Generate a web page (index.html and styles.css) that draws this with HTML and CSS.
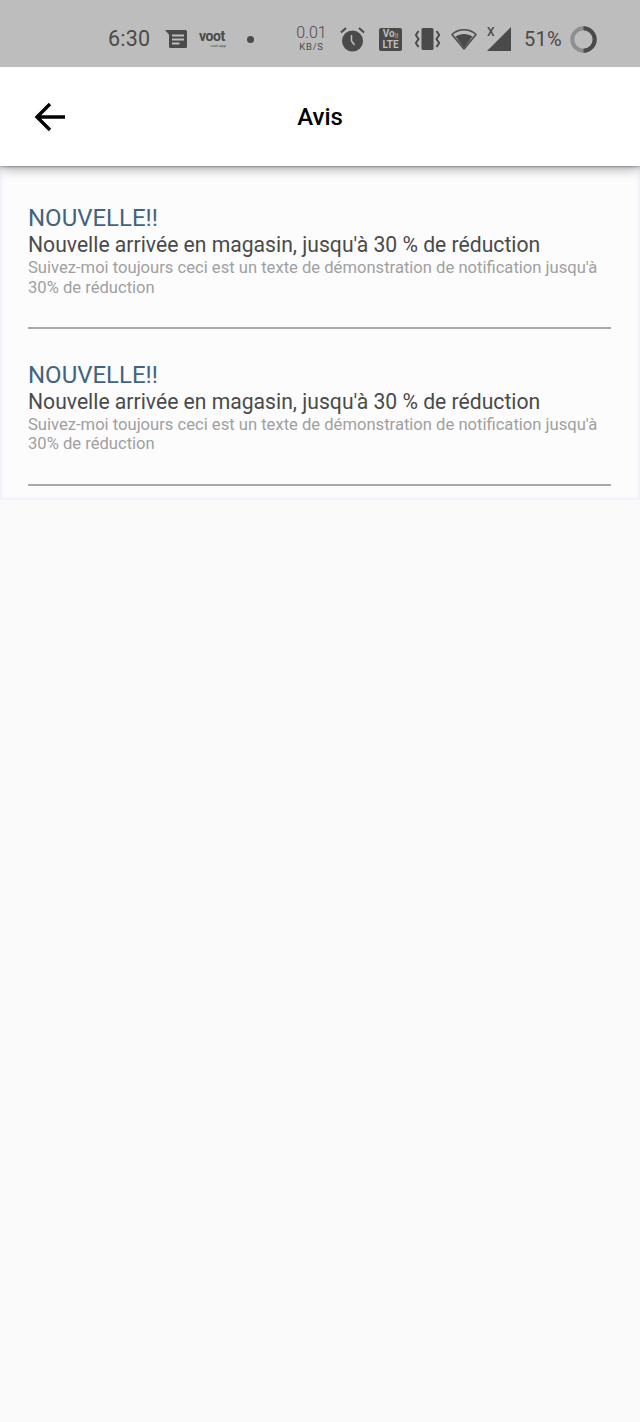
FILE: index.html
```html
<!DOCTYPE html>
<html lang="fr">
<head>
<meta charset="utf-8">
<title>Avis</title>
<link rel="stylesheet" href="styles.css">
</head>
<body>
<div class="status">
  <span class="time">6:30</span>
  <svg class="ic-msg" width="22" height="18" viewBox="0 0 22 18"><path d="M0 0H20.5Q22 0 22 1.5V16.5Q22 18 20.5 18H5.5Q4 18 4 16.5V4.5Z" fill="#4a4a4a"/><path d="M7 5.5H19M7 9.5H19M7 13.5H14.5" stroke="#bdbdbd" stroke-width="2"/></svg>
  <span class="voot">voot<small class="voot-sub">voot app</small></span>
  <span class="dot"></span>
  <span class="speed"><span class="speed-n">0.01</span><span class="speed-u">KB/S</span></span>
  <svg class="ic-alarm" width="25" height="26" viewBox="0 0 25 26"><circle cx="12.5" cy="15" r="10.5" fill="#4a4a4a"/><path d="M1 6.5L6 2M24 6.5L19 2" stroke="#4a4a4a" stroke-width="2"/><path d="M11.5 9V15L14.5 19" stroke="#bdbdbd" stroke-width="1.5" fill="none"/></svg>
  <span class="volte"><span>Vo<i class="volte-w">))</i></span><span>LTE</span></span>
  <svg class="ic-vib" width="25" height="22" viewBox="0 0 25 22"><rect x="6.5" y="0" width="12" height="22" rx="1.5" fill="#4a4a4a"/><path d="M3.5 3L0.8 7L3.5 11L0.8 15L3.5 19M21.5 3L24.2 7L21.5 11L24.2 15L21.5 19" stroke="#4a4a4a" stroke-width="2" fill="none"/></svg>
  <svg class="ic-wifi" width="26" height="22" viewBox="0 0 26 22"><path d="M1 6.5C7.5 0.2 18.5 0.2 25 6.5L13 21Z" fill="none" stroke="#4a4a4a" stroke-width="1.6" stroke-linejoin="round"/><path d="M4.5 8.5C9 5 17 5 21.5 8.5L13 20Z" fill="#4a4a4a"/></svg>
  <span class="signal"><span class="signal-x">X</span><svg class="signal-tri" width="24" height="24" viewBox="0 0 24 24"><path d="M0 24H24V0Z" fill="#4a4a4a"/></svg></span>
  <span class="batt">51%</span>
  <svg class="ic-ring" width="27" height="27" viewBox="0 0 27 27"><circle cx="13.5" cy="13.5" r="11.2" fill="none" stroke="#8f8f8f" stroke-width="4"/><path d="M13.5 2.3A11.2 11.2 0 0 1 13.5 24.7" fill="none" stroke="#4a4a4a" stroke-width="4"/></svg>
</div>
<header class="bar">
  <svg class="back" width="32" height="30" viewBox="0 0 32 30"><path d="M31 15H3M16 2L3 15L16 28" fill="none" stroke="#000" stroke-width="3.4"/></svg>
  <h1 class="title">Avis</h1>
</header>
<main class="panel">
  <article class="item">
    <h2 class="head">NOUVELLE!!</h2>
    <p class="sub">Nouvelle arrivée en magasin, jusqu'à 30 % de réduction</p>
    <p class="body">Suivez-moi toujours ceci est un texte de démonstration de notification jusqu'à 30% de réduction</p>
  </article>
  <article class="item">
    <h2 class="head">NOUVELLE!!</h2>
    <p class="sub">Nouvelle arrivée en magasin, jusqu'à 30 % de réduction</p>
    <p class="body">Suivez-moi toujours ceci est un texte de démonstration de notification jusqu'à 30% de réduction</p>
  </article>
</main>
</body>
</html>
```
FILE: styles.css
```css
* { box-sizing: border-box; }
html, body { margin: 0; padding: 0; }
body {
  width: 640px;
  height: 1422px;
  overflow: hidden;
  background: #fafafa;
  font-family: Roboto, "Liberation Sans", sans-serif;
}
.status {
  height: 67px;
  background: #bdbdbd;
  display: flex;
  align-items: center;
  color: #4a4a4a;
  padding-left: 108px;
  padding-top: 11px;
  padding-bottom: 0;
  position: relative;
  z-index: 1;
}
.time { font-size: 21.5px; width: 41px; line-height: 1; letter-spacing: 0.2px; }
.ic-msg { margin-left: 16px; }
.voot {
  margin-left: 12px;
  width: 27px;
  font-size: 14px;
  font-weight: 700;
  line-height: 13px;
  display: flex;
  flex-direction: column;
  letter-spacing: -0.4px;
}
.voot-sub { font-size: 4px; line-height: 5px; font-weight: 400; text-align: right; letter-spacing: 0; }
.dot { width: 7px; height: 7px; border-radius: 50%; background: #4a4a4a; margin-left: 21px; }
.speed { margin-left: 44px; width: 27px; display: flex; flex-direction: column; align-items: center; }
.speed-n { font-size: 16px; line-height: 14px; font-weight: 300; }
.speed-u { font-size: 9.5px; line-height: 10px; letter-spacing: 0.8px; margin-top: 2px; }
.ic-alarm { margin-left: 15px; }
.volte {
  margin-left: 14px;
  width: 23px;
  height: 23px;
  background: #4a4a4a;
  color: #bdbdbd;
  border-radius: 2px;
  font-size: 10px;
  font-weight: 700;
  line-height: 10px;
  display: flex;
  flex-direction: column;
  align-items: center;
  justify-content: center;
}
.volte-w { font-size: 5px; font-style: normal; }
.ic-vib { margin-left: 13px; }
.ic-wifi { margin-left: 11px; }
.signal { margin-left: 10px; width: 24px; height: 24px; position: relative; display: block; }
.signal-tri { display: block; }
.signal-x { position: absolute; left: 0; top: -1px; font-size: 12px; line-height: 12px; font-weight: 500; }
.batt { margin-left: 13px; font-size: 20px; letter-spacing: 0.3px; width: 42px; }
.ic-ring { margin-left: 4px; }
.bar {
  height: 99px;
  background: #fff;
  box-shadow: 0 3px 11px rgba(0, 0, 0, 0.32), 0 1px 2px rgba(0, 0, 0, 0.25);
  display: flex;
  align-items: center;
  justify-content: center;
  position: relative;
}
.back { position: absolute; left: 34px; top: 35px; }
.title { margin: 1px 0 0; font-size: 24px; font-weight: 500; color: #000; line-height: 1; }
.panel {
  height: 334px;
  border: 1px solid #f0f1f6;
  padding: 0 28px 0 27px;
  background: #fcfcfd;
  box-shadow: inset 0 0 4px rgba(205, 210, 240, 0.35);
}
.item { height: 157.5px; padding-top: 33px; border-bottom: 2px solid #a8a8a8; }
.item:first-child { height: 161.5px; padding-top: 38px; }
.head { margin: 0 0 1px; font-size: 24px; font-weight: 400; color: #42647f; line-height: 26px; }
.sub { margin: 0; font-size: 21.15px; color: #4a4a4a; line-height: 26px; }
.body { margin: 0; font-size: 16.6px; color: #a0a0a0; line-height: 19.5px; }
```
